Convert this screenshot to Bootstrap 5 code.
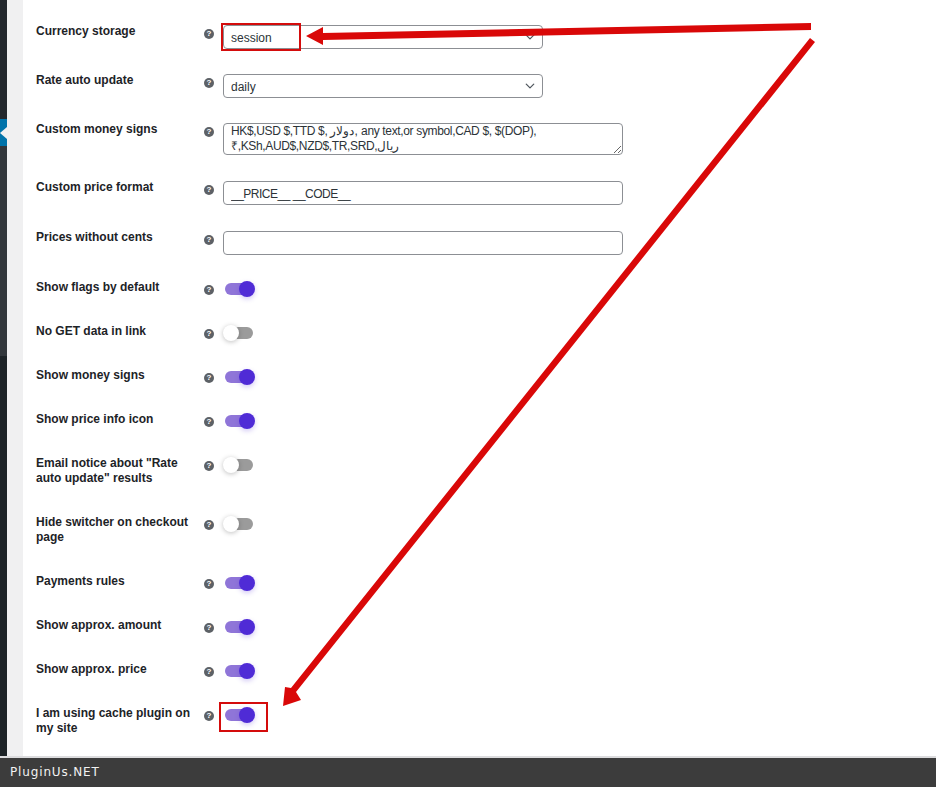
<!DOCTYPE html>
<html lang="en">
  <head>
    <meta charset="UTF-8" />
    <meta name="viewport" content="width=device-width, initial-scale=1.0" />
    <title>Currency options</title>
    <link
      href="https://cdn.jsdelivr.net/npm/bootstrap@5.3.0/dist/css/bootstrap.min.css"
      rel="stylesheet"
    />
    <style>
      html, body { height: 100%; overflow: hidden; }
      body { font-family: "Liberation Sans", Arial, sans-serif; font-size: 12px; color: #1d2327; background: #fff; }
      .wp-shell { height: 756px; overflow: hidden; }
      .wp-side { width: 7px; background: #1d2327; }
      .wp-side-a { height: 119px; background: #23282d; }
      .wp-side-handle { height: 27px; padding-top: 8px; background: #0073aa; }
      .wp-side-handle i { display: block; width: 0; height: 0; border-style: solid; border-width: 6px 7px 6px 0; border-color: transparent #f0f0f1 transparent transparent; }
      .wp-side-b { height: 210px; background: #32373c; }
      .wp-gutter { width: 16px; background: #f0f0f1; }
      .opt-list { padding: 16px 0 0 13px; }
      .opt-row { padding-bottom: 16px; }
      .opt-row.is-area { padding-bottom: 17px; }
      .opt-row.is-extra { padding-bottom: 17px; }
      .opt-row.is-toggle { padding-bottom: 20px; }
      .opt-label { width: 168px; font-weight: 700; line-height: 15px; padding-top: 8px; }
      .is-toggle .opt-label { padding-top: 9px; }
      .opt-help { width: 19px; flex: none; padding-top: 13px; }
      .is-toggle .opt-help { padding-top: 14px; }
      .opt-help span { display: block; width: 10px; height: 10px; border-radius: 50%; background: #5d6166; color: #fff; font-size: 8px; font-weight: 700; line-height: 10px; text-align: center; }
      .opt-ctrl { padding-top: 9px; }
      .is-toggle .opt-ctrl { padding-top: 10px; }
      .opt-ctrl .form-select, .opt-ctrl .form-control { font-family: "Liberation Sans", Arial, sans-serif; font-size: 12px; color: #2c3338; border: 1px solid #8c8f94; border-radius: 4px; box-shadow: none; }
      .opt-ctrl .form-select { width: 320px; height: 24px; min-height: 0; padding: 1px 24px 0 7px; line-height: 20px; background-image: url("data:image/svg+xml,%3csvg xmlns='http://www.w3.org/2000/svg' viewBox='0 0 16 16'%3e%3cpath fill='none' stroke='%2350575e' stroke-linecap='round' stroke-linejoin='round' stroke-width='2' d='m2 5 6 6 6-6'/%3e%3c/svg%3e"); background-position: right 7px center; background-size: 10px 10px; }
      .opt-ctrl .form-control { width: 400px; height: 24px; min-height: 0; padding: 1px 7px 0; line-height: 20px; }
      .opt-ctrl .form-control.price-fmt { letter-spacing: -.5px; }
      .opt-ctrl textarea.form-control { display: block; height: 32px; padding: 0 7px; line-height: 15px; letter-spacing: -.35px; overflow: hidden; }
      .tgl { display: block; position: relative; width: 30px; height: 16px; margin: 0 0 -2px 2px; }
      .tgl-track { position: absolute; left: 0; top: 2px; width: 26px; height: 12px; border-radius: 6px; background: #8f75d8; }
      .tgl-knob { position: absolute; left: 14px; top: 0; width: 16px; height: 16px; border-radius: 50%; background: #4f2bd6; box-shadow: 0 2px 5px rgba(79, 43, 214, .25); }
      .tgl.off .tgl-track { left: 2px; background: #9b9b9b; }
      .tgl.off .tgl-knob { left: -2px; background: #fff; box-shadow: 0 1px 5px rgba(0, 0, 0, .25); }
      .wp-foot-line { height: 2px; background: #dcdcde; }
      .wp-foot { height: 29px; background: #3c3c3c; color: #f2f2f2; font-family: "DejaVu Sans", sans-serif; font-size: 12px; letter-spacing: .85px; padding-left: 10px; line-height: 29px; }
      .marks { position: absolute; left: 0; top: 0; width: 936px; height: 787px; pointer-events: none; }
    </style>
  </head>
  <body>
    <div class="wp-shell d-flex">
      <div class="wp-side flex-shrink-0">
        <div class="wp-side-a"></div>
        <div class="wp-side-handle"><i></i></div>
        <div class="wp-side-b"></div>
      </div>
      <div class="wp-gutter flex-shrink-0"></div>
      <div class="flex-grow-1">
        <div class="opt-list" id="optList"></div>
      </div>
    </div>
    <div class="wp-foot-line"></div>
    <div class="wp-foot">PluginUs.NET</div>

    <!-- annotation arrows and boxes drawn over the form -->
    <svg class="marks" viewBox="0 0 936 787" xmlns="http://www.w3.org/2000/svg">
      <rect x="222" y="24" width="78" height="26" fill="none" stroke="#d40c0c" stroke-width="2" />
      <rect x="220" y="703" width="47" height="28" fill="none" stroke="#d40c0c" stroke-width="2" />
      <polygon fill="#d90808" points="811,23 811,30 323,40 323,45 306,36 323,27 323,33" />
      <polygon fill="#d90808" points="810,38 815,42 296,692 301,700 283,706 285,687 291,688" />
    </svg>

    <script>
      const opsi = [
        { label: "Currency storage", type: "select", value: "session" },
        { label: "Rate auto update", type: "select", value: "daily" },
        { label: "Custom money signs", type: "textarea", value: "HK$,USD $,TTD $, دولار, any text,or symbol,CAD $, $(DOP), ₹,KSh,AUD$,NZD$,TR,SRD,ريال" },
        { label: "Custom price format", type: "input", value: "__PRICE__ __CODE__", extra: true },
        { label: "Prices without cents", type: "input", value: "" },
        { label: "Show flags by default", type: "toggle", on: true },
        { label: "No GET data in link", type: "toggle", on: false },
        { label: "Show money signs", type: "toggle", on: true },
        { label: "Show price info icon", type: "toggle", on: true },
        { label: 'Email notice about "Rate auto update" results', type: "toggle", on: false },
        { label: "Hide switcher on checkout page", type: "toggle", on: false },
        { label: "Payments rules", type: "toggle", on: true },
        { label: "Show approx. amount", type: "toggle", on: true },
        { label: "Show approx. price", type: "toggle", on: true },
        { label: "I am using cache plugin on my site", type: "toggle", on: true },
      ];

      const optList = document.getElementById("optList");

      opsi.forEach((o) => {
        const row = document.createElement("div");
        row.className = "opt-row d-flex" + (o.type === "toggle" ? " is-toggle" : "") + (o.type === "textarea" ? " is-area" : "") + (o.extra ? " is-extra" : "");
        let ctrl = "";
        if (o.type === "select") {
          ctrl = `<select class="form-select"><option>${o.value}</option></select>`;
        } else if (o.type === "textarea") {
          ctrl = `<textarea class="form-control" rows="2">${o.value}</textarea>`;
        } else if (o.type === "input") {
          ctrl = `<input class="form-control${o.extra ? " price-fmt" : ""}" type="text" value="${o.value}" />`;
        } else {
          ctrl = `<span class="tgl${o.on ? "" : " off"}"><span class="tgl-track"></span><span class="tgl-knob"></span></span>`;
        }
        row.innerHTML = `
          <div class="opt-label flex-shrink-0">${o.label}</div>
          <div class="opt-help"><span>?</span></div>
          <div class="opt-ctrl">${ctrl}</div>
        `;
        optList.appendChild(row);
      });
    </script>
    <script src="https://cdn.jsdelivr.net/npm/bootstrap@5.3.0/dist/js/bootstrap.bundle.min.js"></script>
  </body>
</html>
